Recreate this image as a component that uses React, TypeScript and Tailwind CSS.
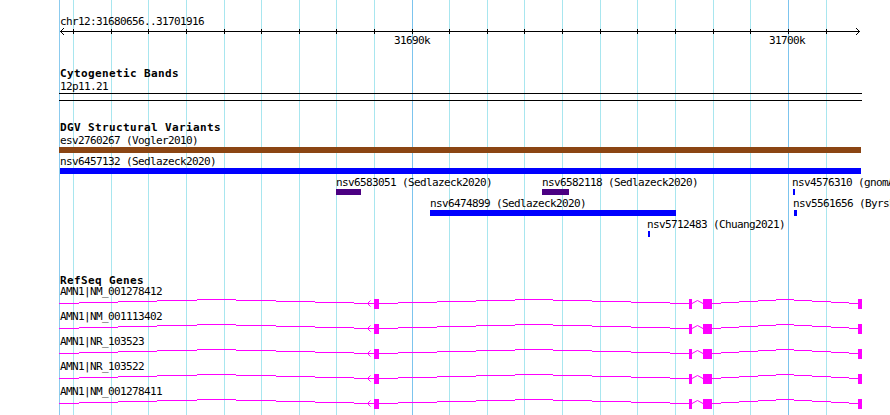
import React from "react";

const GRID = [73, 111, 148, 186, 224, 261, 299, 336, 374, 412, 449, 487, 524, 562, 600, 637, 675, 713, 750, 788, 826];
const MAJOR = new Set([412, 788]);
const MAG = "#ff00ff";

const reg =
  "font-['DejaVu_Sans_Mono',monospace] text-[11px] leading-[11px] tracking-[-0.62px] whitespace-nowrap text-black";
const bold =
  "font-['DejaVu_Sans_Mono',monospace] font-bold text-[11px] leading-[11px] tracking-[0.38px] whitespace-nowrap text-black";

function GridLines() {
  return (
    <svg className="absolute left-0 top-0" width={890} height={415} shapeRendering="crispEdges">
      <rect x={59} y={0} width={1} height={415} fill="#8ccbee" />
      {GRID.map((g) => (
        <rect key={g} x={g} y={0} width={1} height={415} fill={MAJOR.has(g) ? "#7cc4ee" : "#a8e6ef"} />
      ))}
    </svg>
  );
}

function Ruler() {
  return (
    <svg className="absolute left-0 top-0" width={890} height={60}>
      <rect x={60} y={31} width={800} height={1} fill="#000" shapeRendering="crispEdges" />
      {GRID.map((g) => (
        <rect key={g} x={g} y={29} width={1} height={5} fill="#000" shapeRendering="crispEdges" />
      ))}
      <polyline points="64,28 60.5,31.5 64,35" fill="none" stroke="#000" strokeWidth={1} />
      <polyline points="856,28 859.5,31.5 856,35" fill="none" stroke="#000" strokeWidth={1} />
    </svg>
  );
}

function StepArc({ x1, x2, y }: { x1: number; x2: number; y: number }) {
  const L = x2 - x1;
  const seg = L / 8;
  const levels = [0, 1, 2, 3, 4, 3, 2, 1, 0];
  const bounds: number[] = [x1];
  for (let k = 0; k < 8; k++) bounds.push(x1 + seg / 2 + k * seg);
  bounds.push(x2);
  return (
    <>
      {levels.map((lv, i) => {
        const s = Math.round(bounds[i]);
        const e = Math.round(bounds[i + 1]);
        return <rect key={i} x={s} y={y - lv} width={e - s} height={1} fill={MAG} />;
      })}
    </>
  );
}

function GeneGlyph() {
  const ly = 17;
  return (
    <svg className="absolute left-0 top-0" width={890} height={25}>
      <g shapeRendering="crispEdges">
        <StepArc x1={59} x2={374} y={ly} />
        <rect x={374} y={13} width={5} height={10} fill={MAG} />
        <StepArc x1={379} x2={689} y={ly} />
        <rect x={689} y={13} width={3} height={10} fill={MAG} />
        <rect x={703} y={13} width={9} height={10} fill={MAG} />
        <StepArc x1={712} x2={858} y={ly} />
        <rect x={858} y={13} width={4} height={10} fill={MAG} />
      </g>
      <polyline points="692,17.5 697.5,14.5 703,17.5" fill="none" stroke={MAG} strokeWidth={1} />
      <polyline points="370.5,14.5 367.5,17.5 370.5,20.5" fill="none" stroke={MAG} strokeWidth={1} />
    </svg>
  );
}

const GENES = [
  "AMN1|NM_001278412",
  "AMN1|NM_001113402",
  "AMN1|NR_103523",
  "AMN1|NR_103522",
  "AMN1|NM_001278411",
];

type Feat = { label: string; x: number; top: number; bx: number; bw: number; color: string };
const FEATS: Feat[] = [
  { label: "nsv6583051 (Sedlazeck2020)", x: 336, top: 3, bx: 336, bw: 25, color: "#4b0082" },
  { label: "nsv6582118 (Sedlazeck2020)", x: 542, top: 3, bx: 542, bw: 27, color: "#4b0082" },
  { label: "nsv4576310 (gnomAD_v2.1)", x: 792, top: 3, bx: 793, bw: 2, color: "#0000ff" },
  { label: "nsv6474899 (Sedlazeck2020)", x: 430, top: 24, bx: 430, bw: 246, color: "#0000ff" },
  { label: "nsv5561656 (Byrska-Bishop2022)", x: 793, top: 24, bx: 794, bw: 3, color: "#0000ff" },
  { label: "nsv5712483 (Chuang2021)", x: 647, top: 45, bx: 648, bw: 2, color: "#0000ff" },
];

export default function App() {
  return (
    <div className="relative w-[890px] h-[415px] overflow-hidden bg-white">
      <GridLines />
      <div className="relative flex flex-col">
        {/* Ruler */}
        <div className="relative h-[60px]">
          <Ruler />
          <div className={`${reg} absolute left-[60px] top-[16px]`}>chr12:31680656..31701916</div>
          <div className={`${reg} absolute left-[394px] top-[35px]`}>31690k</div>
          <div className={`${reg} absolute left-[769px] top-[35px]`}>31700k</div>
        </div>

        {/* Cytogenetic Bands */}
        <div className="flex flex-col pl-[59px]">
          <div className={`${bold} mt-[8px] pl-px`}>Cytogenetic Bands</div>
          <div className={`${reg} mt-[2px] pl-px`}>12p11.21</div>
          <div className="mt-[1px] h-px w-[803px] bg-black" />
          <div className="mt-[6px] h-px w-[803px] bg-black" />
        </div>

        {/* DGV */}
        <div className="flex flex-col pl-[59px]">
          <div className={`${bold} mt-[21px] pl-px`}>DGV Structural Variants</div>
          <div className={`${reg} mt-[2px] pl-px`}>esv2760267 (Vogler2010)</div>
          <div className="mt-[1px] h-[6px] w-[802px] bg-[#8b4513]" />
          <div className={`${reg} mt-[3px] pl-px`}>nsv6457132 (Sedlazeck2020)</div>
          <div className="mt-[1px] ml-px h-[6px] w-[801px] bg-[#0000ff]" />
          <div className="relative h-[63px]">
            {FEATS.map((f) => (
              <React.Fragment key={f.label}>
                <div className={`${reg} absolute`} style={{ left: f.x - 59, top: f.top }}>
                  {f.label}
                </div>
                <div
                  className="absolute h-[6px]"
                  style={{ left: f.bx - 59, top: f.top + 12, width: f.bw, background: f.color }}
                />
              </React.Fragment>
            ))}
          </div>
        </div>

        {/* RefSeq Genes */}
        <div className="flex flex-col">
          <div className={`${bold} mt-[38px] pl-[60px]`}>RefSeq Genes</div>
          {GENES.map((g) => (
            <div key={g} className="relative h-[25px]">
              <GeneGlyph />
              <div className={`${reg} relative pl-[60px]`}>{g}</div>
            </div>
          ))}
        </div>
      </div>
    </div>
  );
}
